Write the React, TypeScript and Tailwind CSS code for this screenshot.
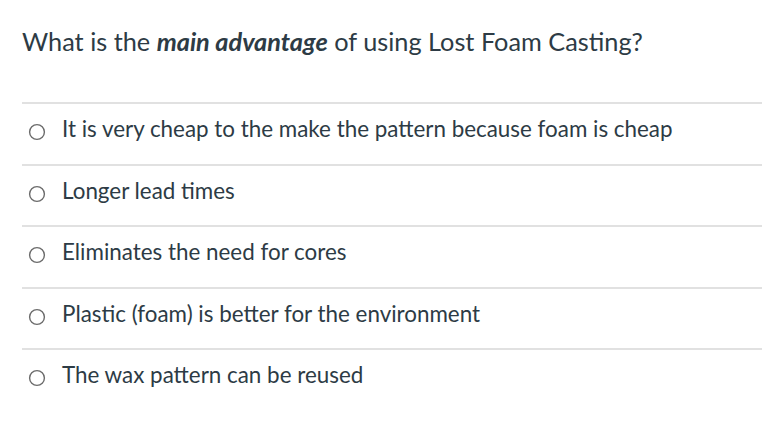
import React from "react";

const options = [
  "It is very cheap to the make the pattern because foam is cheap",
  "Longer lead times",
  "Eliminates the need for cores",
  "Plastic (foam) is better for the environment",
  "The wax pattern can be reused",
];

export default function App() {
  return (
    <div
      className="w-[762px] h-[426px] bg-white pl-[22px] pt-[25px] text-[#2d3b45]"
      style={{ fontFamily: "Lato, 'Open Sans', sans-serif" }}
    >
      <h1 className="text-[25.3px] leading-[32px] font-normal">
        What is the <strong className="font-bold italic">main advantage</strong> of using Lost Foam Casting?
      </h1>
      <div className="mt-[45px]">
        {options.map((o) => (
          <div
            key={o}
            className="border-t-2 border-[#e1e1e1] h-[61.5px] flex items-start pt-[11px]"
          >
            <svg width="18" height="18" viewBox="0 0 18 18" className="ml-[6px] mt-[8px] w-[18px] h-[18px] shrink-0">
              <circle cx="9" cy="9" r="7.4" fill="white" stroke="#6b6b6b" strokeWidth="1.4" />
            </svg>
            <span className="ml-[16px] text-[22.4px] leading-[28px]">{o}</span>
          </div>
        ))}
      </div>
    </div>
  );
}
